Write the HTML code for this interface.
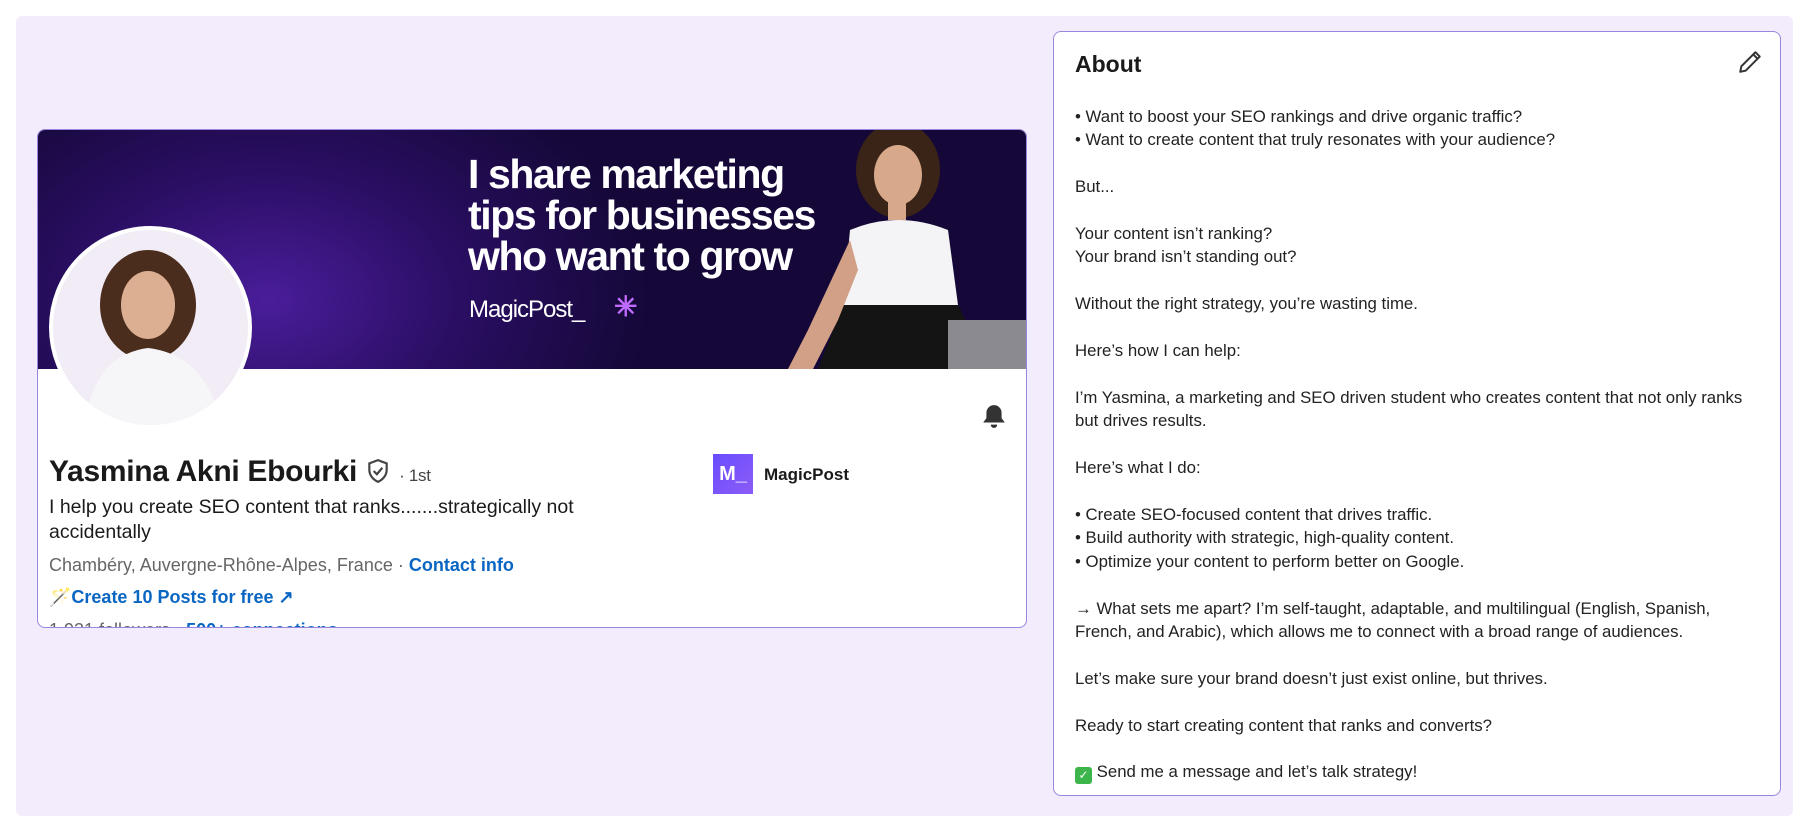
<!DOCTYPE html>
<html><head><meta charset="utf-8"><style>
*{margin:0;padding:0;box-sizing:border-box}
body{width:1808px;height:834px;background:#fff;font-family:"Liberation Sans",sans-serif;position:relative;overflow:hidden}
.panel{position:absolute;left:16px;top:16px;width:1777px;height:800px;background:#f2ecfd;border-radius:6px}
.card{position:absolute;left:37px;top:129px;width:990px;height:499px;background:#fff;border:1px solid #9b86dd;border-radius:8px;overflow:hidden}
.banner{position:absolute;left:0;top:0;width:990px;height:239px;background:radial-gradient(ellipse 380px 260px at 230px 170px,#4a1d9a 0%,#2a0e63 50%,#150838 100%)}
.btxt{position:absolute;left:430px;top:24px;color:#fff;font-weight:bold;font-size:41px;line-height:41px;letter-spacing:-1.4px}
.mp{position:absolute;left:431px;top:166px;color:#fff;font-size:24px;letter-spacing:-1px}
.star{position:absolute;left:576px;top:160px;color:#c06bff;font-size:28px;font-weight:bold}
.av{position:absolute;left:11px;top:96px;width:203px;height:203px;border-radius:50%;background:#fff;overflow:hidden;border:4px solid #fff}
.about{position:absolute;left:1053px;top:31px;width:728px;height:765px;background:#fff;border:1px solid #9b86dd;border-radius:8px}
.about h2{position:absolute;left:21px;top:19px;font-size:23px;font-weight:bold;color:#1a1a1a}
.about .t{position:absolute;left:21px;top:73px;font-size:16.8px;line-height:23.4px;color:#222;white-space:pre}
</style></head><body>
<div class="panel"></div>
<div class="card">
  <div class="banner">
    <div class="btxt">I share marketing<br>tips for businesses<br>who want to grow</div>
    <div class="mp">MagicPost_</div>
    <div class="star">✳</div>
    <svg style="position:absolute;left:720px;top:0" width="270" height="239">
      <ellipse cx="140" cy="40" rx="42" ry="48" fill="#3a2418"/>
      <ellipse cx="140" cy="45" rx="24" ry="30" fill="#d7a98a"/>
      <rect x="130" y="70" width="18" height="20" fill="#d7a98a"/>
      <path d="M92 100 Q140 80 190 100 L200 175 L85 175 Z" fill="#f4f4f6"/>
      <path d="M85 175 L200 175 L230 239 L60 239 Z" fill="#141414"/>
      <path d="M92 110 L50 200 L30 239 L55 239 L80 190 L100 140Z" fill="#d2a086"/>
      <rect x="190" y="190" width="80" height="49" fill="#8a8a90"/>
    </svg>
  </div>
  <div class="av">
    <svg width="200" height="200">
      <rect width="200" height="200" fill="#f1ecf5"/>
      <ellipse cx="95" cy="75" rx="48" ry="55" fill="#4a2d1d"/>
      <ellipse cx="95" cy="75" rx="27" ry="34" fill="#dcae92"/>
      <path d="M30 200 Q40 125 95 118 Q155 125 170 200Z" fill="#f6f6f8"/>
    </svg>
  </div>
  <svg style="position:absolute;left:943px;top:272px" width="26" height="28" viewBox="0 0 24 24"><path d="M12 2a7 7 0 0 0-7 7v5l-3 4h20l-3-4V9a7 7 0 0 0-7-7z M9 20a3 3 0 0 0 6 0z" fill="#333"/></svg>
  <div style="position:absolute;left:11px;top:325px;font-size:30px;color:#1a1a1a;font-weight:bold;letter-spacing:-0.3px">Yasmina Akni Ebourki <svg width="26" height="26" viewBox="0 0 24 24" style="vertical-align:-3px"><path d="M12 2l8 3v6c0 5-3.5 9-8 11-4.5-2-8-6-8-11V5z" fill="none" stroke="#444" stroke-width="2"/><path d="M8 12l3 3 5-6" fill="none" stroke="#444" stroke-width="2"/></svg> <span style="font-size:17px;color:#444;font-weight:normal">· 1st</span></div>
  <div style="position:absolute;left:11px;top:365px;width:570px;font-size:19.5px;line-height:25px;color:#1a1a1a">I help you create SEO content that ranks.......strategically not accidentally</div>
  <div style="position:absolute;left:11px;top:425px;font-size:18px;color:#666">Chambéry, Auvergne-Rhône-Alpes, France · <b style="color:#0a66c2">Contact info</b></div>
  <div style="position:absolute;left:11px;top:457px;font-size:18px;color:#0a66c2;font-weight:bold">🪄Create 10 Posts for free ↗</div>
  <div style="position:absolute;left:11px;top:490px;font-size:18px;color:#666">1,931 followers · <b style="color:#0a66c2">500+ connections</b></div>
  <div style="position:absolute;left:675px;top:324px;width:40px;height:40px;background:linear-gradient(135deg,#6a4cff,#8b5cf6);color:#fff;font-weight:bold;font-size:20px;line-height:40px;text-align:center">M_</div>
  <div style="position:absolute;left:726px;top:335px;font-size:17px;font-weight:bold;color:#1a1a1a">MagicPost</div>
</div>
<div class="about">
  <h2>About</h2>
  <svg style="position:absolute;left:683px;top:17px" width="26" height="26" viewBox="0 0 24 24"><path d="M17 3l4 4L8 20l-5 1 1-5z M15 5l4 4" fill="none" stroke="#333" stroke-width="1.8" stroke-linejoin="round"/></svg>
  <div class="t">• Want to boost your SEO rankings and drive organic traffic?
• Want to create content that truly resonates with your audience?

But...

Your content isn’t ranking?
Your brand isn’t standing out?

Without the right strategy, you’re wasting time.

Here’s how I can help:

I’m Yasmina, a marketing and SEO driven student who creates content that not only ranks
but drives results.

Here’s what I do:

• Create SEO-focused content that drives traffic.
• Build authority with strategic, high-quality content.
• Optimize your content to perform better on Google.

→ What sets me apart? I’m self-taught, adaptable, and multilingual (English, Spanish,
French, and Arabic), which allows me to connect with a broad range of audiences.

Let’s make sure your brand doesn’t just exist online, but thrives.

Ready to start creating content that ranks and converts?

<span style="display:inline-block;width:17px;height:17px;background:#3cb54a;border-radius:3px;color:#fff;font-size:12px;line-height:17px;text-align:center;vertical-align:-2px">✓</span> Send me a message and let’s talk strategy!</div>
</div>
</body></html>
